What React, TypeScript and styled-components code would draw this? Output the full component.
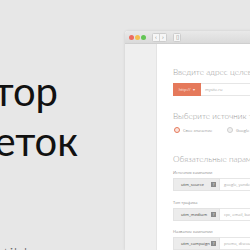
import React from 'react';
import styled, { createGlobalStyle } from 'styled-components';

const GlobalStyle = createGlobalStyle`
  html, body {
    margin: 0;
    padding: 0;
    background: #e7e7e7;
  }
`;

const Page = styled.div`
  width: 250px;
  height: 250px;
  display: flex;
  overflow: hidden;
  background: #e7e7e7;
  font-family: 'Open Sans', 'Liberation Sans', sans-serif;
`;

const Hero = styled.div`
  width: 125px;
  flex: none;
  padding-top: 66px;
  box-sizing: border-box;
  font-family: Lato, 'Open Sans', sans-serif;
`;

// lines are right-aligned inside a fixed width so they overflow off the left edge
const HeroLine = styled.div<{ $end: number }>`
  width: ${(p) => p.$end}px;
  display: flex;
  justify-content: flex-end;
  white-space: nowrap;
  font-size: 40px;
  font-weight: 400;
  line-height: 50px;
  color: #111;
`;

const HeroSub = styled.div`
  margin-top: 76px;
  font-size: 18px;
  font-weight: 300;
  line-height: 24px;
  color: #666;
  white-space: nowrap;
  padding-left: 3px;
`;

const Window = styled.div`
  margin-top: 31px;
  width: 220px;
  flex: none;
  display: flex;
  flex-direction: column;
  background: #fff;
  border-radius: 3px 3px 0 0;
  box-shadow: 0 0 3px rgba(0, 0, 0, 0.12);
`;

const TitleBar = styled.div`
  height: 13px;
  display: flex;
  align-items: center;
  gap: 1px;
  padding-left: 4px;
  background: linear-gradient(#e9e9e9, #dadada);
  border-bottom: 1px solid #cfcfcf;
  border-radius: 3px 3px 0 0;
`;

const Light = styled.span<{ $color: string }>`
  width: 5px;
  height: 5px;
  border-radius: 50%;
  background: ${(p) => p.$color};
`;

const NavGroup = styled.div<{ $gap: number }>`
  margin-left: ${(p) => p.$gap}px;
  display: flex;
  height: 7px;
  border: 1px solid #cdcdcd;
  border-radius: 1.5px;
  background: #f6f6f6;
`;

const NavBtn = styled.span`
  width: 6px;
  display: flex;
  align-items: center;
  justify-content: center;
  font-size: 6px;
  line-height: 7px;
  color: #8a8a8a;
  & + & {
    border-left: 1px solid #d4d4d4;
  }
`;

const Body = styled.div`
  display: flex;
  height: 220px;
`;

const Sidebar = styled.div`
  width: 31px;
  flex: none;
  background: #efefef;
  border-right: 1px solid #e4e4e4;
`;

const Content = styled.div`
  flex: 1;
  padding: 22px 0 0 16px;
  display: flex;
  flex-direction: column;
`;

const Heading = styled.div<{ $mt?: number }>`
  margin-top: ${(p) => p.$mt ?? 0}px;
  font-family: Lato, 'Open Sans', sans-serif;
  font-size: 8.2px;
  font-weight: 300;
  line-height: 12px;
  color: #9a9a9a;
  white-space: nowrap;
`;

const InputRow = styled.div<{ $mt?: number }>`
  margin-top: ${(p) => p.$mt ?? 0}px;
  height: 13px;
  display: flex;
`;

const Protocol = styled.div`
  width: 28px;
  flex: none;
  background: #e5795b;
  color: #fde9e2;
  font-size: 4px;
  display: flex;
  align-items: center;
  justify-content: center;
  gap: 3px;
`;

const Field = styled.div`
  flex: 1;
  border: 1px solid #e6e6e6;
  border-left: none;
  display: flex;
  align-items: center;
  padding-left: 4px;
  font-size: 4px;
  color: #aaa;
  white-space: nowrap;
`;

const RadioRow = styled.div`
  margin-top: 4px;
  height: 8px;
  display: flex;
  align-items: center;
  padding-left: 1px;
`;

const Radio = styled.span<{ $on?: boolean }>`
  width: 4px;
  height: 4px;
  border-radius: 50%;
  border: 1px solid ${(p) => (p.$on ? '#e5795b' : '#cfcfcf')};
  background: ${(p) => (p.$on ? '#fbe3dc' : '#f1f1f1')};
  flex: none;
`;

const RadioText = styled.span<{ $w: number }>`
  width: ${(p) => p.$w}px;
  margin-left: 3px;
  font-size: 4px;
  color: #9a9a9a;
  white-space: nowrap;
`;

const ParamList = styled.div`
  margin-top: 4px;
  display: flex;
  flex-direction: column;
  gap: 7.5px;
`;

const Param = styled.div`
  display: flex;
  flex-direction: column;
`;

const ParamLabel = styled.div`
  font-size: 4px;
  line-height: 8px;
  margin-bottom: 1px;
  color: #8c8c8c;
  white-space: nowrap;
`;

const KeyBox = styled.div`
  width: 47px;
  flex: none;
  background: #ececec;
  border: 1px solid #e3e3e3;
  box-sizing: border-box;
  display: flex;
  align-items: center;
  padding: 0 3px 0 7px;
  font-size: 4.2px;
  color: #4a4a4a;
`;

const KeyText = styled.span`
  flex: 1;
  white-space: nowrap;
`;

const Help = styled.span`
  width: 5px;
  height: 5px;
  background: #8a8a8a;
  color: #eee;
  font-size: 4px;
  line-height: 5px;
  text-align: center;
`;

const params = [
  { label: 'Источник кампании', key: 'utm_source', hint: 'google, yandex, vk, facebook' },
  { label: 'Тип трафика', key: 'utm_medium', hint: 'cpc, email, banner, article' },
  { label: 'Название кампании', key: 'utm_campaign', hint: 'promo, discount, sale' },
];

export default function App() {
  return (
    <>
      <GlobalStyle />
      <Page>
        <Hero>
          <HeroLine $end={58}>Конструктор</HeroLine>
          <HeroLine $end={78}>UTM-меток</HeroLine>
          <HeroSub>tilda.cc</HeroSub>
        </Hero>
        <Window>
          <TitleBar>
            <Light $color="#ec6b5f" />
            <Light $color="#f4bf4f" />
            <Light $color="#62c554" />
            <NavGroup $gap={5}>
              <NavBtn>‹</NavBtn>
              <NavBtn>›</NavBtn>
            </NavGroup>
            <NavGroup $gap={5}>
              <NavBtn>▯</NavBtn>
            </NavGroup>
          </TitleBar>
          <Body>
            <Sidebar />
            <Content>
              <Heading>Введите адрес целевой страницы</Heading>
              <InputRow $mt={5}>
                <Protocol>
                  <span>http://</span>
                  <span>▾</span>
                </Protocol>
                <Field>mysite.ru</Field>
              </InputRow>
              <Heading $mt={14}>Выберите источник трафика</Heading>
              <RadioRow>
                <Radio $on />
                <RadioText $w={44}>Свое значение</RadioText>
                <Radio />
                <RadioText $w={40}>Google Adwords</RadioText>
              </RadioRow>
              <Heading $mt={19}>Обязательные параметры</Heading>
              <ParamList>
                {params.map((p) => (
                  <Param key={p.key}>
                    <ParamLabel>{p.label}</ParamLabel>
                    <InputRow>
                      <KeyBox>
                        <KeyText>{p.key}</KeyText>
                        <Help>?</Help>
                      </KeyBox>
                      <Field>{p.hint}</Field>
                    </InputRow>
                  </Param>
                ))}
              </ParamList>
            </Content>
          </Body>
        </Window>
      </Page>
    </>
  );
}
